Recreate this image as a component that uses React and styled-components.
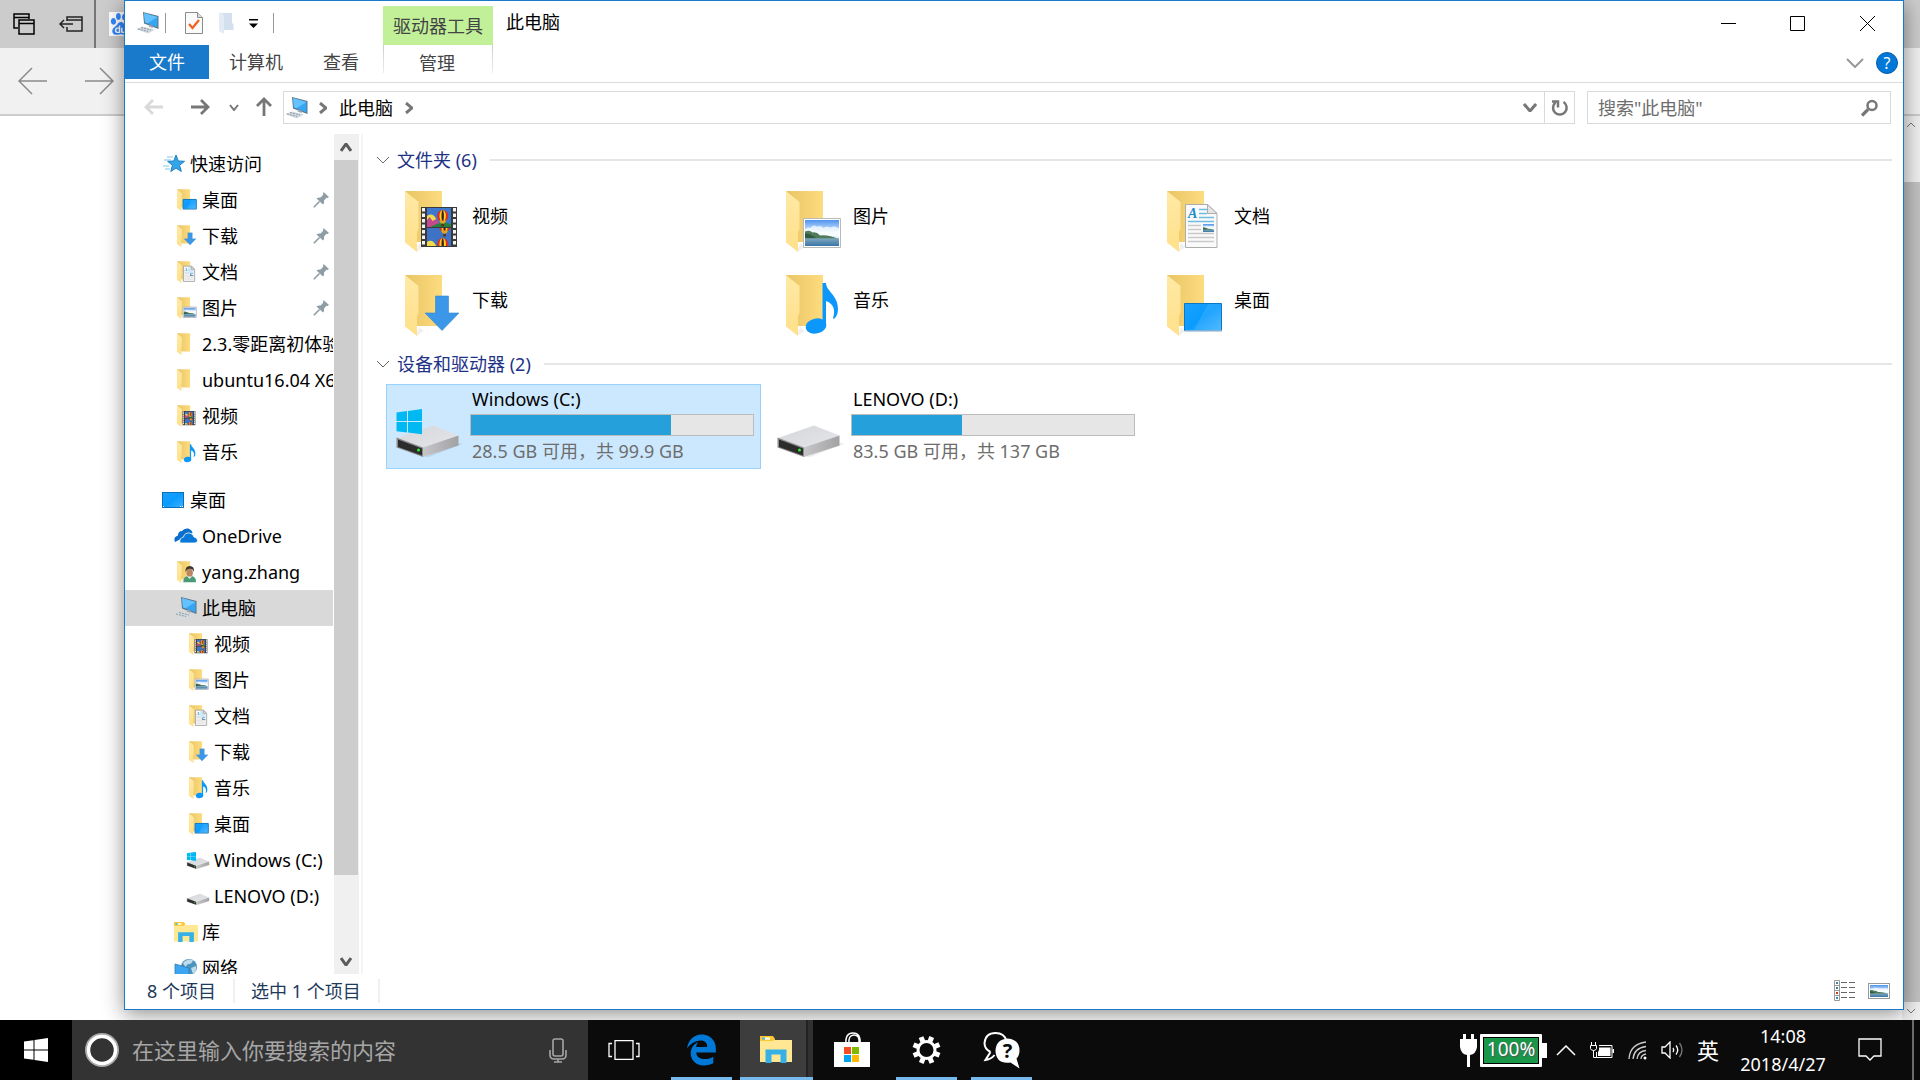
import React from 'react'
import styled, {createGlobalStyle} from 'styled-components'
import {FaEdgeLegacy} from 'react-icons/fa'
import {SiBaidu} from 'react-icons/si'

const GlobalStyle = createGlobalStyle`
  * {
    box-sizing: border-box;
  }

  body {
    margin: 0;
    font-family: 'Noto Sans', 'Noto Sans CJK SC', sans-serif;
    font-size: 18px;
    line-height: 24px;
    color: #000;
    background: #fff;
  }

  button, input {
    margin: 0;
    padding: 0;
    border: 0;
    font: inherit;
    color: inherit;
    background: none;
  }

  svg {
    display: block;
    flex: none;
  }
`;

/* ---------- desktop and the browser behind ---------- */

const Desktop = styled.div`
  display: flex;
  flex-direction: column;
  height: 100vh;
  overflow: hidden;
`;

const Workspace = styled.main`
  position: relative;
  flex: 1;
  min-height: 0;
  overflow: hidden;
`;

const Browser = styled.div`
  display: flex;
  flex-direction: column;
  height: 100%;
  background: #fff;
`;

const BrowserTabs = styled.div`
  display: flex;
  align-items: center;
  height: 48px;
  background: #ccc;
`;

const BrowserTabTools = styled.div`
  display: flex;
  align-items: center;
  gap: 24px;
  width: 96px;
  height: 100%;
  padding-left: 13px;
  border-right: 2px solid #767676;
`;

const Favicon = styled.div`
  display: flex;
  align-items: center;
  justify-content: center;
  width: 24px;
  height: 24px;
  margin-left: 13px;
  color: #3388ff;
  background: #fff;
`;

const BrowserBar = styled.div`
  display: flex;
  align-items: center;
  gap: 36px;
  height: 68px;
  padding-left: 18px;
  background: #f1f1f1;
  border-bottom: 2px solid #ccc;
`;

const BrowserPage = styled.div`
  display: flex;
  flex: 1;
  justify-content: flex-end;
`;

const BrowserScroll = styled.div`
  display: flex;
  flex-direction: column;
  align-items: center;
  width: 18px;
  background: #f0f0f0;
  padding: 6px 0;

  span {
    flex: 1;
    width: 100%;
    margin: 54px 0 6px;
    background: #c2c2c2;
  }
`;

/* ---------- explorer window ---------- */

const Explorer = styled.section`
  position: absolute;
  top: 0;
  right: 16px;
  bottom: 10px;
  left: 124px;
  display: flex;
  flex-direction: column;
  background: #fff;
  border: 1px solid #1979ca;
  box-shadow: 0 4px 20px rgba(0, 0, 0, 0.45);
`;

const TitleBar = styled.header`
  display: flex;
  align-items: center;
  height: 44px;
`;

const QuickAccess = styled.div`
  display: flex;
  align-items: center;
  width: 258px;
  padding-left: 11px;
`;

const Divider = styled.span`
  width: 1px;
  height: 20px;
  margin: 0 ${props => props.$after || '0'} 0 ${props => props.$before || '0'};
  background: #999;
`;

const IconButton = styled.button`
  display: flex;
  align-items: center;
  justify-content: center;
  width: ${props => props.$width || '32px'};
  height: 32px;
`;

const ContextTitle = styled.div`
  align-self: flex-end;
  width: 110px;
  height: 39px;
  line-height: 40px;
  text-align: center;
  color: #444;
  background: #c1f099;
`;

const Title = styled.h1`
  flex: 1;
  margin: 0;
  padding: 0 0 2px 13px;
  font-size: 18px;
  font-weight: 400;
`;

const Ribbon = styled.nav`
  display: flex;
  height: 38px;
  border-bottom: 1px solid #dadbdc;
`;

const RibbonTab = styled.button`
  height: 34px;
  padding: 0 20px;
  color: #444;
`;

const FileTab = styled(RibbonTab)`
  width: 84px;
  padding: 0;
  color: #fff;
  background: #1979ca;
`;

const ManageTab = styled(RibbonTab)`
  width: 110px;
  height: 28px;
  margin-left: 4px;
  padding: 6px 2px 0 0;
  border: solid;
  border-width: 0 1px;
  border-image: linear-gradient(#ccc, #eee) 1;
`;

const RibbonRight = styled.div`
  display: flex;
  align-items: center;
  gap: 12px;
  height: 36px;
  margin-left: auto;
  padding-right: 5px;
`;

const Help = styled.button`
  width: 22px;
  height: 22px;
  border-radius: 50%;
  font-size: 16px;
  line-height: 20px;
  color: #fff;
  background: #0078d7;
  border: 1px solid #0a5ca8;
`;

const AddressRow = styled.div`
  display: flex;
  height: 51px;
  padding: 8px 12px 10px 6px;
`;

const AddressBox = styled.div`
  display: flex;
  align-items: center;
  flex: 1;
  padding-left: 1px;
  border: 1px solid #d9d9d9;
`;

const AddressTools = styled.div`
  display: flex;
  align-items: center;
  align-self: stretch;
  margin-left: auto;
`;

const Crumb = styled.button`
  padding: 0 2px;
`;

const CrumbArrow = styled.span`
  display: flex;
  justify-content: center;
  width: 28px;
`;

const Refresh = styled(IconButton)`
  align-self: stretch;
  height: auto;
  border-left: 1px solid #d9d9d9;
`;

const SearchBox = styled.label`
  display: flex;
  align-items: center;
  width: 304px;
  margin-left: 12px;
  padding: 0 12px 0 10px;
  border: 1px solid #d9d9d9;

  input {
    flex: 1;
    min-width: 0;
    outline: 0;
  }

  input::placeholder {
    color: #6d6d6d;
    opacity: 1;
  }
`;

const Body = styled.div`
  display: flex;
  flex: 1;
  min-height: 0;
`;

const Tree = styled.nav`
  width: 208px;
  padding-top: 12px;
  overflow: hidden;
`;

const TreeGroup = styled.div`
  margin-bottom: 12px;
`;

const TreeRow = styled.button`
  display: flex;
  align-items: center;
  width: 100%;
  height: 36px;
  padding-left: ${props => 37 + props.$level * 12}px;
  padding-right: ${props => (props.$pinned ? '4px' : '0')};
  text-align: left;
  white-space: nowrap;
  background: ${props => (props.$selected ? '#d9d9d9' : 'transparent')};
`;

const TreeIcon = styled.span`
  display: flex;
  justify-content: center;
  flex: none;
  width: 24px;
  margin-right: 4px;
`;

const TreeName = styled.span`
  flex: 1;
  overflow: hidden;
`;

const TreeScroll = styled.div`
  display: flex;
  flex-direction: column;
  width: 25px;
  margin-left: 1px;
  background: #f0f0f0;

  span {
    flex: 1;
    width: 24px;
    margin-bottom: 73px;
    background: #cdcdcd;
  }
`;

const ScrollButton = styled.button`
  display: flex;
  align-items: center;
  justify-content: center;
  width: 24px;
  height: 26px;
`;

const Files = styled.div`
  flex: 1;
  margin-left: 2px;
  padding-right: 11px;
  border-left: 2px solid #f5f5f5;
`;

const GroupHeader = styled.h2`
  display: flex;
  align-items: center;
  gap: 7px;
  height: 24px;
  margin: ${props => props.$margin};
  padding-left: 13px;
  font-size: 18px;
  font-weight: 400;
  color: #1e3287;

  &::after {
    content: '';
    flex: 1;
    height: 2px;
    margin-left: 6px;
    background: #e5e5e5;
  }
`;

const Tiles = styled.div`
  display: grid;
  grid-template-columns: repeat(auto-fill, 375px);
  column-gap: 6px;
  padding-left: 23px;
`;

const Tile = styled.button`
  display: flex;
  align-items: center;
  height: ${props => props.$height};
  padding: 0 6px 0 7px;
  text-align: left;
  background: ${props => (props.$selected ? '#cce8ff' : 'transparent')};
  border: 1px solid ${props => (props.$selected ? '#99d1ff' : 'transparent')};
`;

const TileIcon = styled.span`
  display: flex;
  justify-content: center;
  flex: none;
  width: 76px;
  padding-top: ${props => props.$top};
`;

const TileText = styled.span`
  padding-left: 2px;
  color: ${props => props.$color || '#000'};
`;

const DriveInfo = styled.span`
  display: flex;
  flex: 1;
  flex-direction: column;
  align-self: flex-start;
  gap: 3px;
  padding-top: 2px;
`;

const Capacity = styled.span`
  display: block;
  height: 22px;
  background: #e6e6e6;
  border: 1px solid #bcbcbc;

  i {
    display: block;
    height: 100%;
    background: #26a0da;
  }
`;

const StatusBar = styled.footer`
  display: flex;
  align-items: center;
  height: 35px;
  padding: 0 8px 2px 22px;
  color: #1e395b;
`;

const StatusText = styled.span`
  padding-right: 17px;
  margin-right: 16px;
  border-right: 2px solid #f0f0f0;
`;

const Views = styled.div`
  display: flex;
  align-items: center;
  gap: 2px;
  margin-left: auto;
`;

/* ---------- taskbar ---------- */

const Taskbar = styled.footer`
  display: flex;
  height: 60px;
  color: #fff;
  background: #0b0b0b;
`;

const Start = styled.button`
  display: flex;
  align-items: center;
  justify-content: center;
  width: 72px;
  background: #000;
`;

const Cortana = styled.label`
  display: flex;
  align-items: center;
  width: 516px;
  padding: 0 21px 0 13px;
  background: #333;

  input {
    flex: 1;
    min-width: 0;
    margin-left: 13px;
    font-size: 22px;
    outline: 0;
  }

  input::placeholder {
    color: #a6a6a6;
    opacity: 1;
  }
`;

const TaskButton = styled.button`
  display: flex;
  align-items: center;
  justify-content: center;
  width: 75px;
  padding: 0 7px;
`;

const TaskView = styled(TaskButton)`
  width: 76px;
  padding: 0 12px 0 8px;
`;

const RunningTask = styled(TaskButton)`
  &::before {
    content: '';
    align-self: flex-end;
    width: 61px;
    height: 3px;
    margin-right: -61px;
    background: #76b9ed;
  }

  svg {
    flex: 1;
  }
`;

const ActiveTask = styled(TaskButton)`
  width: 73px;
  margin: 0 1px;
  padding: 3px 1px 0 0;
  background: linear-gradient(90deg, #3d3d3d 66px, #222 66px, #222 68px, #303030 68px);
  border-bottom: 3px solid #76b9ed;
`;

const Tray = styled.div`
  display: flex;
  align-items: center;
  margin-left: auto;
`;

const Power = styled.div`
  display: flex;
  align-items: center;
  gap: 3px;
  margin-right: 9px;
`;

const Battery = styled.span`
  width: 62px;
  height: 33px;
  font-size: 19px;
  line-height: 25px;
  text-align: center;
  text-shadow: 1px 1px 1px #555;
  background: #1a9648;
  border: 3px solid #fff;
  outline: 1px solid #000;
  outline-offset: -4px;
  border-radius: 1px;
`;

const BatteryCap = styled.span`
  width: 5px;
  height: 15px;
  margin-left: -3px;
  background: #fff;
`;

const TrayIcons = styled.div`
  display: flex;
  align-items: center;
  gap: 14px;
`;

const Language = styled.span`
  font-size: 22px;
`;

const Clock = styled.time`
  width: 128px;
  margin-right: 5px;
  font-size: 18px;
  line-height: 28px;
  text-align: center;
`;

const ShowDesktop = styled.span`
  width: 8px;
  height: 100%;
  margin-left: 24px;
  border-left: 2px solid #6b6b6b;
`;

/* ---------- drawings ---------- */

const HiddenSvg = styled.svg`
  position: absolute;
`;

const Defs = () => (
  <HiddenSvg width="0" height="0" aria-hidden="true">
    <defs>
      <linearGradient id="back" x1="0" y1="0" x2="1" y2="0">
        <stop offset="0" stopColor="#e8c464"/>
        <stop offset="1" stopColor="#fddc7f"/>
      </linearGradient>
      <linearGradient id="flap" x1="0" y1="0" x2="0" y2="1">
        <stop offset="0" stopColor="#ffe9a5"/>
        <stop offset="1" stopColor="#ffe08a"/>
      </linearGradient>
      <linearGradient id="screen" x1="0" y1="0" x2="1" y2="1">
        <stop offset="0" stopColor="#1ba1ff"/>
        <stop offset="0.5" stopColor="#0a9bff"/>
        <stop offset="1" stopColor="#3fb2ff"/>
      </linearGradient>
      <linearGradient id="sky" x1="0" y1="0" x2="0" y2="1">
        <stop offset="0" stopColor="#4f93ee"/>
        <stop offset="0.5" stopColor="#e6f4fd"/>
        <stop offset="1" stopColor="#cfe6f5"/>
      </linearGradient>
      <linearGradient id="sea" x1="0" y1="0" x2="0" y2="1">
        <stop offset="0" stopColor="#7fa8bd"/>
        <stop offset="1" stopColor="#3a75a8"/>
      </linearGradient>
      <linearGradient id="driveTop" x1="0" y1="0" x2="1" y2="1">
        <stop offset="0" stopColor="#d5d6d9"/>
        <stop offset="1" stopColor="#e5e6e9"/>
      </linearGradient>
      <linearGradient id="driveSide" x1="0" y1="0" x2="1" y2="0">
        <stop offset="0" stopColor="#c6c6c8"/>
        <stop offset="1" stopColor="#a2a2a4"/>
      </linearGradient>
    </defs>
  </HiddenSvg>
);

const Photo = ({x, y, w, h}) => (
  <svg x={x} y={y} width={w} height={h} viewBox="0 0 36 27" preserveAspectRatio="none">
    <rect width="36" height="27" fill="url(#sky)"/>
    <path d="M0 10q3-3 6-2q3-4 7-1q4-2 6 1q5-2 8 0q4-3 9 1v8H0z" fill="#fff" opacity=".7"/>
    <path d="M0 12q5-2 8 1q4-1 8 3q9-1 20 4H0z" fill="#4f7b5c"/>
    <path d="M0 14q6 0 12 5H0z" fill="#2e5a40"/>
    <rect y="19" width="36" height="8" fill="url(#sea)"/>
  </svg>
);

const Balloon = ({x, y}) => (
  <g transform={`translate(${x} ${y})`}>
    <ellipse cx="0" cy="0" rx="6" ry="6" fill="#e22b1f"/>
    <ellipse cx="0" cy="0" rx="3.500" ry="6" fill="#ffd21f"/>
    <ellipse cx="0" cy="0" rx="1.300" ry="6" fill="#3b2020"/>
    <path d="M-4 4.500h8l-2 3h-4z" fill="#e8a31a"/>
    <rect x="-1.500" y="8" width="3" height="2.500" fill="#5d3218"/>
  </g>
);

const overlays = {
  video: (
    <g>
      <rect x="18" y="17" width="36" height="40" fill="#3a3a3a"/>
      <svg x="24" y="18" width="24" height="19" viewBox="0 0 26 19" preserveAspectRatio="none">
        <rect width="26" height="19" fill="#3d78cf"/>
        <path d="M0 8q6-4 10 3v8H0z" fill="#f3d94c"/>
        <path d="M0 12l3-3 3 4 4-2 3 4v4H0z" fill="#c04a8d"/>
        <path d="M8 17q9-4 18-1v3H4z" fill="#23823c"/>
        <Balloon x={17} y={8}/>
      </svg>
      <svg x="24" y="38" width="24" height="18" viewBox="0 0 26 18" preserveAspectRatio="none">
        <rect width="26" height="18" fill="#3d72c4"/>
        <Balloon x={19} y={-2}/>
        <path d="M0 14q6-4 10 4H0z" fill="#f3d94c"/>
        <Balloon x={17} y={16}/>
      </svg>
      <path d="M20.500 18v38M51.500 18v38" stroke="#f4f4f4" strokeWidth="3" strokeDasharray="3.500 2"/>
    </g>
  ),
  picture: (
    <g>
      <rect x="19.500" y="28.500" width="37" height="29" fill="#fff" stroke="#b9b9b9" vectorEffect="non-scaling-stroke"/>
      <Photo x={21} y={30} w={34} h={26}/>
    </g>
  ),
  document: (
    <g>
      <path d="M20.500 14.500h22l9.500 9v34h-31.500z" fill="#fafafa" stroke="#adadad" vectorEffect="non-scaling-stroke"/>
      <path d="M42.500 14.500v9h9.500z" fill="#e4e4e4" stroke="#adadad" vectorEffect="non-scaling-stroke"/>
      <text x="23" y="28" fontFamily="Liberation Serif, serif" fontStyle="italic" fontWeight="700" fontSize="14" fill="#1c8ccb">A</text>
      <path d="M34 19.500h8M34 23.500h8M34 27.500h15M23 31.500h26" stroke="#6fbce4" strokeWidth="1.300"/>
      <path d="M23 35.500h13M23 39.500h13M23 43.500h26M23 47.500h26M23 51.500h26" stroke="#c9c9c9" strokeWidth="1.300"/>
      <Photo x={38} y={34} w={11} h={8}/>
    </g>
  ),
  download: <path d="M32.500 22h13v17H56L39 56.500 22 39h10.500z" fill="#3c97e8" stroke="#2f86d6" strokeWidth=".6"/>,
  music: (
    <g fill="#0c97fb">
      <ellipse cx="32" cy="52" rx="10.500" ry="7.500" transform="rotate(-12 32 52)"/>
      <path d="M38.500 9h3.500c0 8 12 12 12 26 0 5-2 8-4 10l-1-1c3-8 0-15-7-17v25h-3.500z"/>
    </g>
  ),
  desktop: (
    <g>
      <rect x="19.500" y="29.500" width="37" height="27" fill="url(#screen)" stroke="#0c78c4" vectorEffect="non-scaling-stroke"/>
      <path d="M29 56l14-26h13v26z" fill="#fff" opacity=".1"/>
      <path d="M20 57h37" stroke="#a8c4da" strokeWidth="1.500"/>
    </g>
  ),
  user: (
    <g>
      <path d="M20 60q0-18 14-18h10q12 2 12 18z" fill="#4a9a78"/>
      <path d="M30 42l8 9 7-9z" fill="#f1f1f1"/>
      <ellipse cx="38" cy="33" rx="9" ry="11" fill="#b98562"/>
      <path d="M26 32q-1-18 12-18 14 0 12 17-3-9-12-9-9 1-12 10z" fill="#3c342f"/>
    </g>
  ),
};

const Folder = ({kind, size = 58}) => (
  <svg width={size} height={size > 30 ? 62 : 22} viewBox="0 0 58 62">
    <path d="M13 62l8-5-5-4z" fill="#000" opacity=".06"/>
    <path d="M2 1h37v51H14z" fill="url(#back)"/>
    <path d="M2 1l13.500 11v27l-1.500 3v20L2 52.500z" fill="url(#flap)"/>
    {overlays[kind]}
  </svg>
);

const Drive = ({windows, small}) => (
  <svg width={small ? 24 : 76} height={small ? 19 : 52} viewBox={small ? '0 0 67 52' : '0 0 76 52'}>
    <path d="M30 50l36-14 3 1-34 13z" fill="#000" opacity=".08"/>
    <path d="M3 31l36-12.500 25.500 10L29 41z" fill="url(#driveTop)"/>
    <path d="M29 40.500l35.500-12v10L29 50z" fill="url(#driveSide)"/>
    <path d="M2.500 30.500L29 40.500V50L2.500 40.500z" fill="#8a8a8a"/>
    <path d="M4 32.500l24 9V48.500l-24-8.500z" fill="#2c2c2c"/>
    <circle cx="24.500" cy="43" r="1.500" fill="#2df02d"/>
    {windows && (
      <path d="M2.500 5.500L13 4v10H2.500zM14 3.900L28 2v12H14zM2.500 15H13v10.500L2.500 24.300zM14 15h14v12.300L14 25.600z" fill="#00b9f2"/>
    )}
  </svg>
);

const Computer = () => (
  <svg width="24" height="24" viewBox="0 0 24 24">
    <path d="M7 1l15.500 4v13L8 12.500z" fill="#5e7482"/>
    <path d="M8 2l13.500 4v10.500L9 11.500z" fill="#35a6f3"/>
    <path d="M8 2l13.500 4-10 6.200-2.500-.7z" fill="#63c2ff"/>
    <path d="M0 18l7-2.500 12 3-7 4z" fill="#d3dadf"/>
    <path d="M2 18l10 2.500M5 16.500l10 2.500" stroke="#8c9ba5" strokeDasharray="2 1"/>
    <path d="M13 14.500l4 1.500" stroke="#9aa7af" strokeWidth="2"/>
  </svg>
);

const Star = () => (
  <svg width="24" height="22" viewBox="0 0 24 22">
    <path d="M14 2l2.300 6 6.200.3-4.900 4 1.700 6.200-5.300-3.500-5.200 3.500 1.600-6.200-4.800-4 6.200-.3z" fill="#35a5ea" stroke="#1c7fc2"/>
    <path d="M5 4h6M2 7h7M1 13h6M3 16h5" stroke="#85c6ee" strokeWidth="1.200"/>
  </svg>
);

const Monitor = () => (
  <svg width="24" height="18" viewBox="0 0 24 18">
    <rect x=".5" y="1.500" width="21" height="15" fill="url(#screen)" stroke="#0b6fb8"/>
    <path d="M1 15.500h20" stroke="#fff" strokeDasharray="1 16 1 1"/>
  </svg>
);

const OneDrive = () => (
  <svg width="24" height="16" viewBox="0 0 24 16">
    <path d="M1 14q-2-5 3-6.500Q4 3 8 3q2-3 6-2.500 4 1 4.500 4.500" fill="#0a6fcb"/>
    <path d="M6 15q-1-5 3.500-6 1-4.500 6-4 3.500.5 4.500 4 3.500.5 3.500 3.500 0 2.500-3 2.500z" fill="#0a78d6" stroke="#fff" strokeWidth=".8"/>
  </svg>
);

const Library = ({size = 24}) => (
  <svg width={size} height={size * 0.85} viewBox="0 0 32 27">
    <path d="M0 1h13l2 3h17v22H0z" fill="#ffe793"/>
    <path d="M0 0h13l2 3-2 2H0z" fill="#fcc832"/>
    <path d="M2 1.500h3v2H2z" fill="#4bb3e8"/>
    <path d="M5 1.500h5v2H5z" fill="#fff"/>
    <path d="M5.500 13.500h21V27h-6v-8.500h-9V27h-6z" fill="#36b1e7"/>
  </svg>
);

const Network = () => (
  <svg width="24" height="22" viewBox="0 0 24 22">
    <circle cx="15" cy="10" r="8" fill="#4c93bd"/>
    <path d="M9 6q4-5 10-3-1 4-4 4t-3 4zM17 11l5-2q1 5-3 8z" fill="#bfdceb"/>
    <path d="M1 7l14 4v11L1 18z" fill="#3ca6f2" stroke="#2d7cb5" strokeWidth=".8"/>
  </svg>
);

const Pin = () => (
  <svg width="16" height="16" viewBox="0 0 16 16">
    <path d="M10.500 0L16 5l-1.500 1-1-.2-2.500 2.700q.5 2.500-1 4L3.500 6.500q2-1.500 4-1L10 3z" fill="#8e9ca5"/>
    <path d="M6.500 9.500L.8 15.200" stroke="#8e9ca5" strokeWidth="1.600"/>
  </svg>
);

// one stroked arrow head, turned to the direction that is needed
const Chevron = ({w = 12, h = 7, color = '#5b5b5b', stroke = 2, dir = 'down'}) => {
  const paths = {
    down: `M1 1L${w / 2} ${h - 1}L${w - 1} 1`,
    up: `M1 ${h - 1}L${w / 2} 1L${w - 1} ${h - 1}`,
    right: `M1 1L${w - 1} ${h / 2}L1 ${h - 1}`,
  };
  return (
    <svg width={w} height={h} viewBox={`0 0 ${w} ${h}`}>
      <path d={paths[dir]} fill="none" stroke={color} strokeWidth={stroke}/>
    </svg>
  );
};

const Arrow = ({color = '#777', turn = 0}) => (
  <svg width="20" height="20" viewBox="0 0 20 20">
    <path d="M1 10h17M11 3l7 7-7 7" fill="none" stroke={color} strokeWidth="2.800" transform={`rotate(${turn} 10 10)`}/>
  </svg>
);

const ThinArrow = ({turn = 0}) => (
  <svg width="30" height="28" viewBox="0 0 30 28">
    <path d="M1 14h28M16 1l13 13-13 13" fill="none" stroke="#8a8a8a" strokeWidth="1.500" transform={`rotate(${turn} 15 14)`}/>
  </svg>
);

const Gear = () => (
  <svg width="28" height="28" viewBox="0 0 28 28">
    <circle cx="14" cy="14" r="8.500" fill="none" stroke="#fff" strokeWidth="3"/>
    {[22, 67, 112, 157, 202, 247, 292, 337].map(a => (
      <rect key={a} x="11.500" y="0" width="5" height="5" fill="#fff" transform={`rotate(${a} 14 14)`}/>
    ))}
  </svg>
);

const treeIcons = {
  star: <Star/>,
  monitor: <Monitor/>,
  onedrive: <OneDrive/>,
  computer: <Computer/>,
  library: <Library/>,
  network: <Network/>,
  driveC: <Drive small windows/>,
  driveD: <Drive small/>,
};

const quickItems = [
  {name: '快速访问', icon: 'star', level: 0},
  {name: '桌面', icon: 'desktop', level: 1, pinned: true},
  {name: '下载', icon: 'download', level: 1, pinned: true},
  {name: '文档', icon: 'document', level: 1, pinned: true},
  {name: '图片', icon: 'picture', level: 1, pinned: true},
  {name: '2.3.零距离初体验', icon: 'plain', level: 1},
  {name: 'ubuntu16.04 X64', icon: 'plain', level: 1},
  {name: '视频', icon: 'video', level: 1},
  {name: '音乐', icon: 'music', level: 1},
];

const desktopItems = [
  {name: '桌面', icon: 'monitor', level: 0},
  {name: 'OneDrive', icon: 'onedrive', level: 1},
  {name: 'yang.zhang', icon: 'user', level: 1},
  {name: '此电脑', icon: 'computer', level: 1, selected: true},
  {name: '视频', icon: 'video', level: 2},
  {name: '图片', icon: 'picture', level: 2},
  {name: '文档', icon: 'document', level: 2},
  {name: '下载', icon: 'download', level: 2},
  {name: '音乐', icon: 'music', level: 2},
  {name: '桌面', icon: 'desktop', level: 2},
  {name: 'Windows (C:)', icon: 'driveC', level: 2},
  {name: 'LENOVO (D:)', icon: 'driveD', level: 2},
  {name: '库', icon: 'library', level: 1},
  {name: '网络', icon: 'network', level: 1},
];

const folders = [
  {name: '视频', kind: 'video'},
  {name: '图片', kind: 'picture'},
  {name: '文档', kind: 'document'},
  {name: '下载', kind: 'download'},
  {name: '音乐', kind: 'music'},
  {name: '桌面', kind: 'desktop'},
];

const drives = [
  {name: 'Windows (C:)', space: '28.5 GB 可用，共 99.9 GB', used: 71, selected: true},
  {name: 'LENOVO (D:)', space: '83.5 GB 可用，共 137 GB', used: 39},
];

const TreeItem = ({name, icon, level, pinned, selected}) => (
  <TreeRow $level={level} $pinned={pinned} $selected={selected}>
    <TreeIcon>{treeIcons[icon] || <Folder kind={icon} size={21}/>}</TreeIcon>
    <TreeName>{name}</TreeName>
    {pinned && <Pin/>}
  </TreeRow>
);

const BackgroundBrowser = () => (
  <Browser>
    <BrowserTabs>
      <BrowserTabTools>
        <svg width="22" height="22" viewBox="0 0 22 22" fill="none" stroke="#000" strokeWidth="1.500">
          <path d="M5 15H1V1h15v5M1 4.500h15"/>
          <path d="M6 7h15v14H6zM6 10.500h15"/>
        </svg>
        <svg width="24" height="18" viewBox="0 0 24 18" fill="none" stroke="#222" strokeWidth="1.500">
          <path d="M8 6V2h15v14H8v-4M8 5h15M1 9h13M5 5L1 9l4 4"/>
        </svg>
      </BrowserTabTools>
      <Favicon><SiBaidu size={22}/></Favicon>
    </BrowserTabs>
    <BrowserBar>
      <ThinArrow turn={180}/>
      <ThinArrow/>
    </BrowserBar>
    <BrowserPage>
      <BrowserScroll>
        <Chevron w={10} h={6} stroke={1} dir="up" color="#777"/>
        <span/>
        <Chevron w={10} h={6} stroke={1} color="#777"/>
      </BrowserScroll>
    </BrowserPage>
  </Browser>
);

const WindowHead = () => (
  <>
    <TitleBar>
      <QuickAccess>
        <Computer/>
        <Divider $before="5px" $after="12px"/>
        <IconButton aria-label="属性">
          <svg width="18" height="22" viewBox="0 0 18 22">
            <path d="M.5.500h12l5 5v16H.5z" fill="#fafafa" stroke="#8b8b8b"/>
            <path d="M12.500.500v5h5" fill="#ddd" stroke="#8b8b8b"/>
            <path d="M4 12l3.500 4L14 8" fill="none" stroke="#f0611c" strokeWidth="2.200"/>
          </svg>
        </IconButton>
        <IconButton aria-label="新建文件夹">
          <svg width="15" height="22" viewBox="0 0 15 22">
            <path d="M2 1h11v10l1.500 1v6H4z" fill="#d5e0ef"/>
            <path d="M0 0l5 3v19l-5-3z" fill="#e4ebf5"/>
          </svg>
        </IconButton>
        <IconButton $width="22px" aria-label="自定义">
          <svg width="9" height="9" viewBox="0 0 9 9">
            <path d="M0 0h9v1.500H0zM0 4.500h9L4.500 9z"/>
          </svg>
        </IconButton>
        <Divider $before="9px"/>
      </QuickAccess>
      <ContextTitle>驱动器工具</ContextTitle>
      <Title>此电脑</Title>
      <IconButton $width="70px" aria-label="最小化">
        <svg width="15" height="15" viewBox="0 0 15 15"><path d="M0 7.500h15" stroke="#000"/></svg>
      </IconButton>
      <IconButton $width="69px" aria-label="最大化">
        <svg width="15" height="15" viewBox="0 0 15 15"><path d="M.5.500h14v14H.5z" fill="none" stroke="#000"/></svg>
      </IconButton>
      <IconButton $width="71px" aria-label="关闭">
        <svg width="15" height="15" viewBox="0 0 15 15"><path d="M0 0l15 15M15 0L0 15" stroke="#000"/></svg>
      </IconButton>
    </TitleBar>
    <Ribbon>
      <FileTab>文件</FileTab>
      <RibbonTab>计算机</RibbonTab>
      <RibbonTab>查看</RibbonTab>
      <ManageTab>管理</ManageTab>
      <RibbonRight>
        <Chevron w={18} h={10} color="#999"/>
        <Help>?</Help>
      </RibbonRight>
    </Ribbon>
    <AddressRow>
      <IconButton $width="46px" aria-label="后退"><Arrow color="#d9d9d9" turn={180}/></IconButton>
      <IconButton $width="46px" aria-label="前进"><Arrow/></IconButton>
      <IconButton $width="22px" aria-label="最近"><Chevron w={10} h={7} color="#777"/></IconButton>
      <IconButton $width="38px" aria-label="上移"><Arrow turn={-90}/></IconButton>
      <AddressBox>
        <Computer/>
        <CrumbArrow><Chevron w={8} h={12} stroke={3} color="#777" dir="right"/></CrumbArrow>
        <Crumb>此电脑</Crumb>
        <CrumbArrow><Chevron w={8} h={12} stroke={3} color="#777" dir="right"/></CrumbArrow>
        <AddressTools>
          <IconButton $width="28px" aria-label="展开"><Chevron w={14} h={9} stroke={3} color="#777"/></IconButton>
          <Refresh $width="30px" aria-label="刷新">
            <svg width="18" height="18" viewBox="0 0 18 18" fill="none" stroke="#777" strokeWidth="2.500">
              <path d="M12.500 3a6.800 6.800 0 1 1-8 .5"/>
              <path d="M1 2.500h6v6"/>
            </svg>
          </Refresh>
        </AddressTools>
      </AddressBox>
      <SearchBox>
        <input placeholder={'搜索"此电脑"'} aria-label="搜索"/>
        <svg width="18" height="18" viewBox="0 0 18 18" fill="none" stroke="#777">
          <circle cx="12" cy="6.500" r="4.500" strokeWidth="2.500"/>
          <path d="M8 10.500l-6 6" strokeWidth="3.200"/>
        </svg>
      </SearchBox>
    </AddressRow>
  </>
);

const ExplorerWindow = () => (
  <Explorer>
    <WindowHead/>
    <Body>
      <Tree>
        <TreeGroup>
          {quickItems.map(item => <TreeItem key={item.name} {...item}/>)}
        </TreeGroup>
        <TreeGroup>
          {desktopItems.map((item, i) => <TreeItem key={i} {...item}/>)}
        </TreeGroup>
      </Tree>
      <TreeScroll>
        <ScrollButton aria-label="向上"><Chevron w={12} h={9} stroke={3} dir="up"/></ScrollButton>
        <span/>
        <ScrollButton aria-label="向下"><Chevron w={12} h={9} stroke={3}/></ScrollButton>
      </TreeScroll>
      <Files>
        <GroupHeader $margin="14px 0 2px">
          <Chevron w={14} h={8} stroke={1} color="#666"/>
          文件夹 (6)
        </GroupHeader>
        <Tiles>
          {folders.map(folder => (
            <Tile key={folder.name} $height="84px">
              <TileIcon $top="10px"><Folder kind={folder.kind}/></TileIcon>
              <TileText>{folder.name}</TileText>
            </Tile>
          ))}
        </Tiles>
        <GroupHeader $margin="10px 0 8px">
          <Chevron w={14} h={8} stroke={1} color="#666"/>
          设备和驱动器 (2)
        </GroupHeader>
        <Tiles>
          {drives.map(drive => (
            <Tile key={drive.name} $height="85px" $selected={drive.selected}>
              <TileIcon $top="13px"><Drive windows={drive.selected}/></TileIcon>
              <DriveInfo>
                <TileText>{drive.name}</TileText>
                <Capacity><i style={{width: `${drive.used}%`}}/></Capacity>
                <TileText $color="#6d6d6d">{drive.space}</TileText>
              </DriveInfo>
            </Tile>
          ))}
        </Tiles>
      </Files>
    </Body>
    <StatusBar>
      <StatusText>8 个项目</StatusText>
      <StatusText>选中 1 个项目</StatusText>
      <Views>
        <IconButton aria-label="详细信息">
          <svg width="22" height="22" viewBox="0 0 22 22" fill="none">
            <path d="M.5.500h5v20h-5zM.5 5.500h5M.5 10.500h5M.5 15.500h5" stroke="#999"/>
            <path d="M2 3h2M2 8h2M2 18h2" stroke="#3a86b0" strokeWidth="2"/>
            <path d="M2 13h2" stroke="#c8371d" strokeWidth="2"/>
            <path d="M7 2.500h6M15 2.500h6M7 7.500h6M15 7.500h6M7 12.500h6M15 12.500h6M7 17.500h6M15 17.500h6" stroke="#666"/>
          </svg>
        </IconButton>
        <IconButton aria-label="缩略图">
          <svg width="22" height="16" viewBox="0 0 22 16">
            <rect x=".5" y=".5" width="21" height="15" fill="#fff" stroke="#999"/>
            <Photo x={2} y={2} w={18} h={12}/>
          </svg>
        </IconButton>
      </Views>
    </StatusBar>
  </Explorer>
);

const TaskbarRow = () => (
  <Taskbar>
    <Start aria-label="开始">
      <svg width="24" height="24" viewBox="0 0 24 24">
        <path d="M0 3.500l9.500-1.300v9.300H0zM10.500 2L24 0v11.500H10.500zM0 12.500h9.500v9.300L0 20.500zM10.500 12.500H24V24l-13.500-2z" fill="#fff"/>
      </svg>
    </Start>
    <Cortana>
      <svg width="34" height="34" viewBox="0 0 34 34" fill="none">
        <circle cx="17" cy="17" r="15.500" stroke="#aaa" strokeWidth="3"/>
        <circle cx="17" cy="17" r="13.500" stroke="#fff" strokeWidth="3.500"/>
      </svg>
      <input placeholder="在这里输入你要搜索的内容" aria-label="搜索"/>
      <svg width="18" height="25" viewBox="0 0 18 25" fill="none" stroke="#a6a6a6" strokeWidth="1.600">
        <rect x="4" y="1" width="10" height="17" rx="2"/>
        <path d="M1 12v5q0 4 4 4h8q4 0 4-4v-5M9 21v3M5 24h8"/>
      </svg>
    </Cortana>
    <TaskView aria-label="任务视图">
      <svg width="32" height="20" viewBox="0 0 32 20" fill="none" stroke="#fff" strokeWidth="1.300">
        <path d="M7 .7h18v18.600H7zM4 3.500H1v13h3M28 3.500h3v13h-3"/>
      </svg>
    </TaskView>
    <RunningTask aria-label="Edge"><FaEdgeLegacy size={32} color="#0078d7"/></RunningTask>
    <ActiveTask aria-label="文件资源管理器"><Library size={32}/></ActiveTask>
    <TaskButton aria-label="应用商店">
      <svg width="36" height="36" viewBox="0 0 36 36">
        <path d="M12 12q-1-11 7-11t7 11M15 12q-1-9 5-9t5 9" fill="none" stroke="#fff" strokeWidth="1.500"/>
        <path d="M0 10h36v25H0z" fill="#fff"/>
        <path d="M10 15h7v7h-7z" fill="#f25022"/>
        <path d="M18 15h7v7h-7z" fill="#7fba00"/>
        <path d="M10 23h7v7h-7z" fill="#00a4ef"/>
        <path d="M18 23h7v7h-7z" fill="#ffb900"/>
      </svg>
    </TaskButton>
    <RunningTask aria-label="设置"><Gear/></RunningTask>
    <RunningTask aria-label="帮助">
      <svg width="38" height="38" viewBox="0 0 38 38">
        <path d="M8 21Q2 18 2 12 3 2 13 2q9 0 11 8M8 21l-5 8q6-1 9-5" fill="none" stroke="#fff" strokeWidth="2"/>
        <path d="M25 7.500q12 1 12 12 0 5-3 8l3 10-9-6q-14 2-15-11 0-12 12-13z" fill="#fff"/>
        <text x="25" y="27" textAnchor="middle" fontFamily="Noto Sans, sans-serif" fontWeight="700" fontSize="20" fill="#0b0b0b">?</text>
      </svg>
    </RunningTask>
    <Tray>
      <Power>
        <svg width="17" height="34" viewBox="0 0 17 34">
          <path d="M3 1h3v5h5V1h3v5h3v8q-1 7-7 8v12H7V22q-6-1-7-8V6h3z" fill="#fff"/>
        </svg>
        <Battery>100%</Battery>
        <BatteryCap/>
      </Power>
      <TrayIcons>
        <Chevron w={20} h={11} stroke={1.5} color="#fff" dir="up"/>
        <svg width="24" height="17" viewBox="0 0 24 17">
          <path d="M1.500 0v3M5.500 0v3M.5 3.500h6v3q-.5 2-3 2t-3-2zM3.500 8.500V15.500h3" fill="none" stroke="#fff"/>
          <path d="M9 3.500h13v12H6.500V10" fill="none" stroke="#fff"/>
          <path d="M9 5.500h11.500V14H8V10l1-2zM22.500 7H24v4h-1.500z" fill="#fff"/>
        </svg>
        <svg width="19" height="19" viewBox="0 0 19 19" fill="none" stroke="#ccc" strokeWidth="1.300">
          <path d="M1 18Q2 3 18 1M5 18Q6 7 18 5.500M9 18q1-8 9-8.500M13 18q0-4 5-5"/>
          <circle cx="17" cy="17" r="1.500" fill="#fff" stroke="none"/>
        </svg>
        <svg width="22" height="18" viewBox="0 0 22 18" fill="none" stroke="#fff" strokeWidth="1.300">
          <path d="M1 6h3l5-5v16l-5-5H1z"/>
          <path d="M12 7q1.500 2 0 4M15 4.500q3.500 4.500 0 9"/>
          <path d="M18.500 2q5 7 0 14" stroke="#777"/>
        </svg>
        <Language>英</Language>
      </TrayIcons>
      <Clock>14:08<br/>2018/4/27</Clock>
      <IconButton $width="36px" aria-label="通知">
        <svg width="24" height="24" viewBox="0 0 24 24">
          <path d="M1 1h22v17h-7l-4 4-4-4H1z" fill="none" stroke="#fff" strokeWidth="1.300"/>
        </svg>
      </IconButton>
      <ShowDesktop/>
    </Tray>
  </Taskbar>
);

const App = () => (
  <Desktop>
    <GlobalStyle/>
    <Defs/>
    <Workspace>
      <BackgroundBrowser/>
      <ExplorerWindow/>
    </Workspace>
    <TaskbarRow/>
  </Desktop>
);

export default App;
